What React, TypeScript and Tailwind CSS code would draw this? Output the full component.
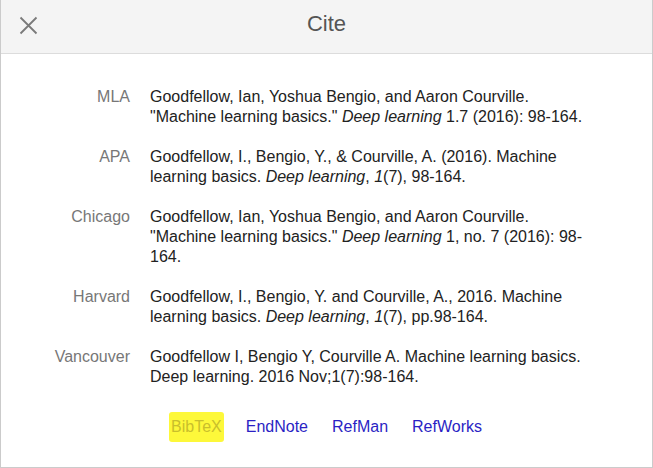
import { ReactNode } from "react";

interface Citation {
  style: string;
  text: ReactNode;
}

const citations: Citation[] = [
  {
    style: "MLA",
    text: (
      <>
        Goodfellow, Ian, Yoshua Bengio, and Aaron Courville. "Machine learning
        basics." <i>Deep learning</i> 1.7 (2016): 98-164.
      </>
    ),
  },
  {
    style: "APA",
    text: (
      <>
        Goodfellow, I., Bengio, Y., &amp; Courville, A. (2016). Machine learning
        basics. <i>Deep learning</i>, <i>1</i>(7), 98-164.
      </>
    ),
  },
  {
    style: "Chicago",
    text: (
      <>
        Goodfellow, Ian, Yoshua Bengio, and Aaron Courville. "Machine learning
        basics." <i>Deep learning</i> 1, no. 7 (2016): 98-164.
      </>
    ),
  },
  {
    style: "Harvard",
    text: (
      <>
        Goodfellow, I., Bengio, Y. and Courville, A., 2016. Machine learning
        basics. <i>Deep learning</i>, <i>1</i>(7), pp.98-164.
      </>
    ),
  },
  {
    style: "Vancouver",
    text: (
      <>
        Goodfellow I, Bengio Y, Courville A. Machine learning basics. Deep
        learning. 2016 Nov;1(7):98-164.
      </>
    ),
  },
];

const exports = ["EndNote", "RefMan", "RefWorks"];

export default function App() {
  return (
    <div className="w-[653px] h-[468px] bg-white border-x border-b border-[#cbcbcb] font-['Liberation_Sans',Arial,sans-serif] flex flex-col overflow-hidden">
      <div className="relative h-[54px] shrink-0 bg-[#f4f4f4] border-b border-[#dcdcdc] flex items-center justify-center">
        <button className="absolute left-[18px] top-[16px] w-[19px] h-[19px] text-[#7a7a7a]">
          <svg viewBox="0 0 19 19" className="w-full h-full">
            <path
              d="M1.5 1.5L17.5 17.5M17.5 1.5L1.5 17.5"
              stroke="currentColor"
              strokeWidth="1.8"
              fill="none"
            />
          </svg>
        </button>
        <h2 className="text-[22px] text-[#555] leading-none -mt-[5px]">Cite</h2>
      </div>

      <div className="pt-[33px] pl-[28px] grid grid-cols-[101px_445px] gap-x-[20px] gap-y-[20px] text-[16px] leading-[20px]">
        {citations.map((c) => (
          <div key={c.style} className="contents">
            <div className="text-right text-[#777]">{c.style}</div>
            <div className="text-[#222]">{c.text}</div>
          </div>
        ))}
      </div>

      <div className="mt-[30px] flex justify-center gap-[24px] text-[16px] leading-[20px]">
        <a className="relative text-[#c9bf2c] bg-[#fdf83a] -mx-[2px] px-[2px] py-[5px] -my-[5px] rounded-[3px] cursor-pointer">
          BibTeX
        </a>
        {exports.map((e) => (
          <a key={e} className="text-[#2b1fc4] cursor-pointer">
            {e}
          </a>
        ))}
      </div>
    </div>
  );
}
